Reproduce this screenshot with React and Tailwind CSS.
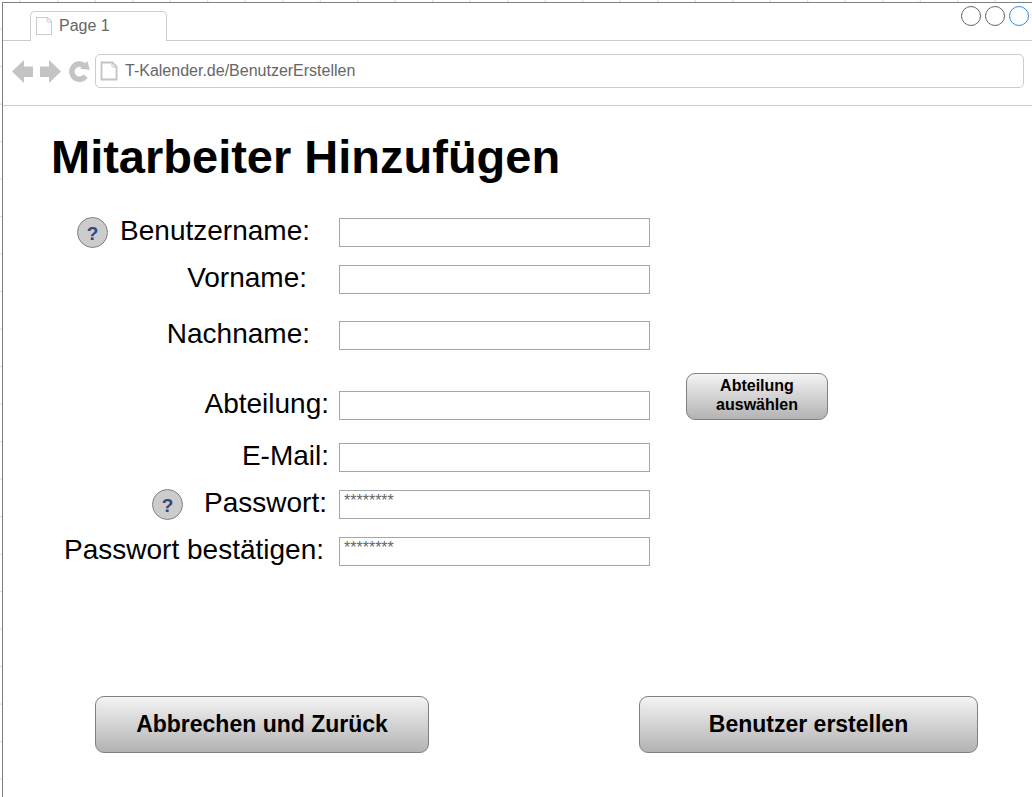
function PageIcon({ thick }) {
  return (
    <svg viewBox="0 0 18 20" className="h-5 w-[18px] shrink-0" fill="none" stroke={thick ? "#c4c4c4" : "#cccccc"} strokeWidth={thick ? 1.8 : 1.1} aria-hidden="true">
      <path d="M1.5 1.5H12.5L16.5 5.5V18.5H1.5Z" />
      <path d="M12 1.5V5.2Q12 6 12.8 6H16.5" strokeWidth="1" />
    </svg>
  );
}

function Help({ topic }) {
  return (
    <button
      type="button"
      aria-label={`Hilfe zu ${topic}`}
      className="flex size-[31px] shrink-0 items-center justify-center rounded-full border border-[#808080] bg-[#cccccc] pt-0.5 text-[19px] leading-none font-bold text-[#314580]"
    >
      ?
    </button>
  );
}

function Field({ id, label, type = "text", placeholder, help, labelClass, children }) {
  return (
    <div className="flex items-end">
      <div className={`flex h-[29px] w-[336px] shrink-0 items-center justify-end ${labelClass}`}>
        {help && <Help topic={label} />}
        <label htmlFor={id} className="h-[29px] text-[28px] leading-[26px] whitespace-nowrap">
          {label}:
        </label>
      </div>
      <input
        id={id}
        type={type}
        placeholder={placeholder}
        className="h-[29px] w-[311px] border border-[#a6a6a6] bg-white px-1 pb-2 text-base leading-5 text-[#666666] outline-none placeholder:text-[#666666]"
      />
      {children}
    </div>
  );
}

const buttonClass =
  "rounded-[9px] border border-[#808080] bg-linear-to-b from-[#f4f4f4] to-[#b3b3b3] text-center font-bold";

export default function App() {
  return (
    <div className="flex min-h-screen flex-col overflow-x-hidden bg-white bg-[linear-gradient(90deg,transparent_20px,#d8d8d8_20px,#d8d8d8_21px,transparent_21px),linear-gradient(180deg,transparent_29px,#d8d8d8_29px,#d8d8d8_30px,transparent_30px)] bg-size-[37.5px_37.5px] pt-0.5 pl-0.5 font-['Liberation_Sans',Arial,sans-serif] text-black">
      <div className="flex flex-1 flex-col border-t border-l border-[#808080] bg-white">
        <header className="border-b border-[#cccccc]">
          <div className="flex h-[38px] items-end text-base text-[#666666]">
            <div className="w-[27px] self-stretch border-b border-[#cccccc]" />
            <div className="flex h-[30px] w-[137px] items-center gap-[6px] rounded-t-[5px] border border-b-0 border-[#cccccc] pb-0.5 pl-1">
              <PageIcon />
              <span>Page 1</span>
            </div>
            <div className="flex flex-1 items-start justify-end gap-1 self-stretch border-b border-[#cccccc] pt-[3px] pr-[3px]">
              <button type="button" aria-label="Minimieren" className="size-5 rounded-full border border-[#666666]" />
              <button type="button" aria-label="Maximieren" className="size-5 rounded-full border border-[#666666]" />
              <button type="button" aria-label="Schließen" className="size-5 rounded-full border border-[#2b8fe6]" />
            </div>
          </div>
          <nav className="flex items-center pt-[13px] pr-2 pb-[17px] pl-[9px]">
            <button type="button" aria-label="Zurück" className="mr-[6px]">
              <svg viewBox="0 0 22 24" className="block h-6 w-[22px]" fill="#c4c4c4">
                <path d="M0 12.5L12 1V7.5H21V18H12V24Z" />
              </svg>
            </button>
            <button type="button" aria-label="Vorwärts" className="mr-[6px]">
              <svg viewBox="0 0 22 24" className="block h-6 w-[22px]" fill="#c4c4c4">
                <path d="M21 12.5L9 1V7.5H0V18H9V24Z" />
              </svg>
            </button>
            <button type="button" aria-label="Neu laden" className="mr-[5px]">
              <svg viewBox="0 0 22 24" className="block h-6 w-[22px]" fill="none">
                <path d="M17.5 17.2A7.6 7.6 0 1 1 16 6.6" stroke="#c4c4c4" strokeWidth="5.6" />
                <path d="M19.3 2L21.8 10.8L12 9.8Z" fill="#c4c4c4" />
              </svg>
            </button>
            <div className="flex h-[34px] flex-1 items-center gap-[7px] rounded-[5px] border border-[#cccccc] pl-1">
              <PageIcon thick />
              <input
                aria-label="Adresse"
                defaultValue="T-Kalender.de/BenutzerErstellen"
                className="h-6 min-w-0 flex-1 bg-transparent text-base text-[#666666] outline-none"
              />
            </div>
          </nav>
        </header>

        <main>
          <h1 className="pt-6 pl-12 text-[47px] leading-[54px] font-bold">Mitarbeiter Hinzufügen</h1>
          <form className="pt-[34px]" onSubmit={(e) => e.preventDefault()}>
            <div className="flex flex-col">
              <Field id="benutzername" label="Benutzername" help labelClass="gap-3 pr-[29px]" />
              <div className="pt-[18px]">
                <Field id="vorname" label="Vorname" labelClass="pr-8" />
              </div>
              <div className="pt-[27px]">
                <Field id="nachname" label="Nachname" labelClass="pr-[29px]" />
              </div>
              <div className="pt-[23px]">
                <Field id="abteilung" label="Abteilung" labelClass="pr-[10px]">
                  <button type="button" className={`${buttonClass} ml-9 h-[47px] w-[142px] px-5 pb-1 text-base leading-[19px]`}>
                    Abteilung auswählen
                  </button>
                </Field>
              </div>
              <div className="pt-[23px]">
                <Field id="email" label="E-Mail" labelClass="pr-[10px]" />
              </div>
              <div className="pt-[18px]">
                <Field id="passwort" label="Passwort" help placeholder="********" type="password" labelClass="gap-[21px] pr-3" />
              </div>
              <div className="pt-[18px]">
                <Field id="bestaetigen" label="Passwort bestätigen" placeholder="********" type="password" labelClass="pr-[15px]" />
              </div>
            </div>
            <div className="flex justify-between pt-[130px] pr-[54px] pb-11 pl-[92px]">
              <button type="button" className={`${buttonClass} h-[57px] w-[334px] text-[23px]`}>
                Abbrechen und Zurück
              </button>
              <button type="submit" className={`${buttonClass} h-[57px] w-[339px] text-[23px]`}>
                Benutzer erstellen
              </button>
            </div>
          </form>
        </main>
      </div>
    </div>
  );
}
